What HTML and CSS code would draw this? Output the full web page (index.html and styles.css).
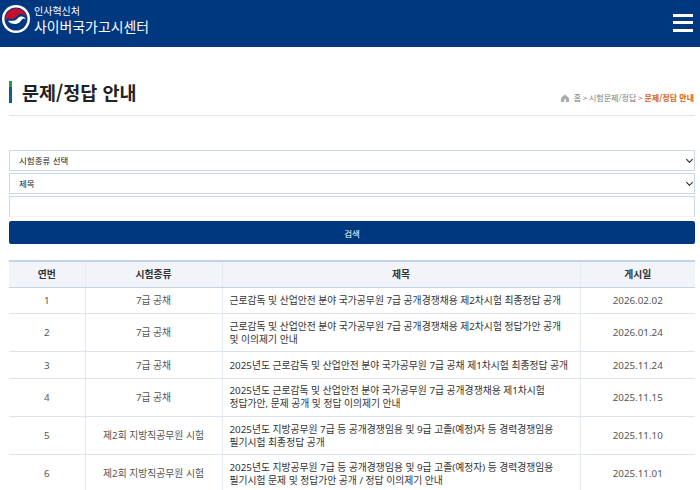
FILE: index.html
```html
<!DOCTYPE html>
<html lang="ko">
<head>
<meta charset="utf-8">
<title>문제/정답 안내</title>
<link rel="stylesheet" href="styles.css">
</head>
<body>
<header class="topbar">
  <div class="brand">
    <svg class="emblem" width="28" height="28" viewBox="0 0 28 28">
      <circle cx="14" cy="14" r="14" fill="#fff"/>
      <circle cx="14" cy="14" r="11.500" fill="#00387f"/>
      <path d="M3.500 15 C3 8.500 8 3.500 14 3.500 C20 3.500 24.500 8 24.500 13 C23.500 10 21 8.500 18.500 9 C15.500 9.500 14.500 12.500 12 13.500 C9.500 14.500 7.500 13 6 13.500 C4.500 14 4 14.500 3.500 15Z" fill="#c8102e"/>
      <path d="M6 16 C8 15 10.500 16.500 13 15.500 C15.500 14.500 16 12 18.500 11.500 C21 11 23 12 23.800 14.500 C22 12.500 20.500 13.500 19.500 15 C18 17.500 15.500 19 13 19 C10 19 7.500 18 6 16Z" fill="#fff"/>
    </svg>
    <div class="brand-text">
      <span class="brand-sub">인사혁신처</span>
      <span class="brand-main">사이버국가고시센터</span>
    </div>
  </div>
  <button class="menu" aria-label="메뉴"><span></span><span></span><span></span></button>
</header>

<main class="content">
  <div class="title-row">
    <h1 class="title">문제/정답 안내</h1>
    <nav class="crumbs">
      <svg class="home" width="8" height="8" viewBox="0 0 9 9"><path d="M4.500 .5 L9 4.500 V9 H5.500 V6 H3.500 V9 H0 V4.500Z" fill="#aaa"/></svg>
      <span class="trail">홈 &gt; 시험문제/정답 &gt; </span><b>문제/정답 안내</b>
    </nav>
  </div>

  <form class="search">
    <div class="select-wrap"><select class="field"><option>시험종류 선택</option></select></div>
    <div class="select-wrap"><select class="field"><option>제목</option></select></div>
    <input class="field input" type="text">
    <button class="submit" type="button">검색</button>
  </form>

  <table class="board">
    <colgroup><col class="c1"><col class="c2"><col class="c3"><col class="c4"></colgroup>
    <thead>
      <tr><th>연번</th><th>시험종류</th><th>제목</th><th>게시일</th></tr>
    </thead>
    <tbody>
      <tr><td>1</td><td>7급 공채</td><td class="subject">근로감독 및 산업안전 분야 국가공무원 7급 공개경쟁채용 제2차시험 최종정답 공개</td><td>2026.02.02</td></tr>
      <tr><td>2</td><td>7급 공채</td><td class="subject">근로감독 및 산업안전 분야 국가공무원 7급 공개경쟁채용 제2차시험 정답가안 공개 및 이의제기 안내</td><td>2026.01.24</td></tr>
      <tr><td>3</td><td>7급 공채</td><td class="subject">2025년도 근로감독 및 산업안전 분야 국가공무원 7급 공채 제1차시험 최종정답 공개</td><td>2025.11.24</td></tr>
      <tr><td>4</td><td>7급 공채</td><td class="subject">2025년도 근로감독 및 산업안전 분야 국가공무원 7급 공개경쟁채용 제1차시험 정답가안, 문제 공개 및 정답 이의제기 안내</td><td>2025.11.15</td></tr>
      <tr><td>5</td><td>제2회 지방직공무원 시험</td><td class="subject">2025년도 지방공무원 7급 등 공개경쟁임용 및 9급 고졸(예정)자 등 경력경쟁임용 필기시험 최종정답 공개</td><td>2025.11.10</td></tr>
      <tr><td>6</td><td>제2회 지방직공무원 시험</td><td class="subject">2025년도 지방공무원 7급 등 공개경쟁임용 및 9급 고졸(예정자) 등 경력경쟁임용 필기시험 문제 및 정답가안 공개 / 정답 이의제기 안내</td><td>2025.11.01</td></tr>
    </tbody>
  </table>
</main>
</body>
</html>
```

FILE: styles.css
```css
* { box-sizing: border-box; }
html, body { margin: 0; padding: 0; height: 490px; overflow: hidden; background: #fff; }
body { font-family: "Noto Sans CJK KR", "Noto Sans", sans-serif; color: #333; font-size: 10px; }

.topbar { height: 47px; background: #00387f; display: flex; align-items: center; justify-content: space-between; padding: 0 7px 0 2px; }
.brand { display: flex; align-items: center; gap: 4px; margin-top: -9px; }
.emblem { display: block; }
.brand-text { display: flex; flex-direction: column; color: #fff; }
.brand-sub { font-size: 10px; line-height: 13px; }
.brand-main { font-size: 13.900px; line-height: 18px; }
.menu { width: 20px; height: 18px; margin-top: -2px; padding: 0; border: 0; background: none; display: flex; flex-direction: column; justify-content: space-between; }
.menu span { display: block; height: 3px; background: #fff; }

.content { padding: 0 5px 0 9px; }

.title-row { display: flex; justify-content: space-between; align-items: flex-end; height: 69px; padding-bottom: 11px; border-bottom: 1px solid #e5e5e5; }
.title { margin: 0 0 1px 0; padding-left: 13px; font-size: 18.500px; line-height: 22px; font-weight: 700; color: #222; background: linear-gradient(#2a9a3c 0 6px, #1457a8 6px) left center / 3px 22px no-repeat; height: 22px; }
.crumbs { display: flex; align-items: center; gap: 5px; font-size: 8px; line-height: 10px; color: #777; margin-bottom: 1px; padding-right: 1px; }
.crumbs b { color: #d9600f; font-weight: 700; margin-left: -3px; }
.trail { word-spacing: -0.500px; }
.home { display: block; }

.search { margin-top: 34px; display: flex; flex-direction: column; gap: 2px; }
.select-wrap { position: relative; }
.select-wrap::after { content: ""; position: absolute; right: 3px; top: 7px; width: 4px; height: 4px; border-right: 1.500px solid #222; border-bottom: 1.500px solid #222; transform: rotate(45deg); pointer-events: none; }
.field { display: block; width: 100%; height: 21px; border: 1px solid #c9d9e6; background: #fff; font: 8.500px "Noto Sans CJK KR", sans-serif; color: #222; padding: 0 0 1px 9px; border-radius: 0; appearance: none; }
.input { padding: 0 4px; border-bottom-color: #eef2f6; }
.submit { display: block; width: 100%; height: 23px; margin-top: 2px; border: 0; border-radius: 2px; background: #00387f; color: #fff; font: 8.500px "Noto Sans CJK KR", sans-serif; }

.board { width: 100%; margin-top: 16px; border-collapse: collapse; table-layout: fixed; border-top: 2px solid #c4d2e6; font-family: "Noto Sans", "Noto Sans CJK KR", sans-serif; }
.c1 { width: 76px; }
.c2 { width: 137px; }
.c3 { width: 358px; }
.c4 { width: 115px; }
.board th { height: 26px; background: #f1f4f8; font-size: 9.800px; font-weight: 700; color: #333; text-align: center; padding: 0; border-bottom: 1px solid #c4d2e6; border-left: 1px solid #e4ebf2; }
.board td { height: 26.500px; padding: 5.650px 6px; font-size: 9.800px; line-height: 13px; color: #555; text-align: center; border-bottom: 1px solid #dbe4ec; border-left: 1px solid #e4ebf2; }
.board th:first-child, .board td:first-child { border-left: 0; }
.board td.subject { text-align: left; color: #333; padding-left: 7px; padding-right: 9px; word-break: keep-all; }
```
